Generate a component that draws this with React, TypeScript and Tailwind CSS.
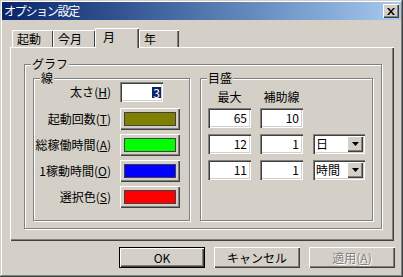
import React from "react";

const raised =
  "shadow-[inset_1px_1px_#ffffff,inset_-1px_-1px_#404040,inset_-2px_-2px_#808080]";
const sunken =
  "shadow-[inset_1px_1px_#808080,inset_2px_2px_#404040,inset_-1px_-1px_#ffffff,inset_-2px_-2px_#d4d0c8]";
const etched =
  "border border-[#808080] shadow-[inset_1px_1px_#ffffff,1px_1px_#ffffff]";

function Group({
  label,
  className,
  children,
}: {
  label: string;
  className?: string;
  children: React.ReactNode;
}) {
  return (
    <div className={`relative ${etched} ${className ?? ""}`}>
      <span className="absolute left-[6px] top-[-7px] bg-[#d4d0c8] px-[1px] text-[12px] leading-[12px]">
        {label}
      </span>
      {children}
    </div>
  );
}

function Label({ text, k, tail }: { text: string; k: string; tail?: string }) {
  return (
    <span className="w-[77px] text-right text-[12px] leading-[14px] whitespace-nowrap">
      {text}(<u>{k}</u>){tail}
    </span>
  );
}

function ColorButton({ color }: { color: string }) {
  return (
    <div className={`w-[60px] h-[22px] ${raised} flex items-center justify-center`}>
      <div className={`w-[52px] h-[14px] border border-[#404040] ${color}`} />
    </div>
  );
}

function NumBox({ v }: { v: string }) {
  return (
    <div
      className={`w-[43px] h-[20px] bg-white ${sunken} flex items-center justify-end pr-[4px] text-[12px] leading-[14px]`}
    >
      {v}
    </div>
  );
}

function Combo({ v }: { v: string }) {
  return (
    <div className={`w-[52px] h-[20px] bg-white ${sunken} flex items-center pl-[3px] pr-[2px]`}>
      <span className="flex-1 text-[12px] leading-[14px]">{v}</span>
      <div className={`w-[16px] h-[16px] bg-[#d4d0c8] ${raised} flex items-center justify-center`}>
        <svg width="7" height="4" viewBox="0 0 7 4">
          <path d="M0 0h7L3.5 4z" fill="#000" />
        </svg>
      </div>
    </div>
  );
}

function DlgButton({
  children,
  def,
  disabled,
}: {
  children: React.ReactNode;
  def?: boolean;
  disabled?: boolean;
}) {
  return (
    <div
      className={`w-[86px] h-[21px] flex items-center justify-center text-[12px] leading-[14px] ${
        def ? "border border-black" : ""
      } ${raised} ${
        disabled ? "text-[#808080] [text-shadow:1px_1px_0_#ffffff]" : "text-black"
      }`}
    >
      {children}
    </div>
  );
}

export default function App() {
  return (
    <div
      className="w-[403px] h-[277px] bg-[#d4d0c8] p-[2px] flex flex-col text-black shadow-[inset_-1px_-1px_#404040,inset_1px_1px_#d4d0c8,inset_-2px_-2px_#808080,inset_2px_2px_#ffffff]"
      style={{ fontFamily: '"Noto Sans CJK JP", "Liberation Sans", sans-serif' }}
    >
      {/* title bar */}
      <div className="h-[18px] bg-linear-to-r from-[#0a246a] to-[#a6caf0] flex items-center pl-[2px] pr-[2px]">
        <span className="flex-1 text-white text-[12px] leading-[14px] tracking-[-1.3px]">
          オプション設定
        </span>
        <div className={`w-[16px] h-[14px] bg-[#d4d0c8] ${raised} flex items-center justify-center`}>
          <svg width="8" height="7" viewBox="0 0 8 7">
            <path d="M0 0h2l2 2.5L6 0h2L5 3.5 8 7H6L4 4.5 2 7H0l3-3.5z" fill="#000" />
          </svg>
        </div>
      </div>

      {/* body */}
      <div className="flex flex-col pl-[8px] pr-[7px] pt-[8px]">
        {/* tabs */}
        <div className="h-[19px] flex items-end pl-[2px]">
          <div className="w-[41px] h-[17px] shadow-[inset_1px_1px_#ffffff,inset_-1px_0_#404040] flex items-center pl-[5px] text-[12px] leading-[14px]">
            起動
          </div>
          <div className="w-[42px] h-[17px] shadow-[inset_1px_1px_#ffffff,inset_-1px_0_#404040] flex items-center pl-[5px] text-[12px] leading-[14px]">
            今月
          </div>
          <div className="relative z-10 w-[44px] h-[20px] mb-[-1px] bg-[#d4d0c8] shadow-[inset_1px_1px_#ffffff,inset_-1px_0_#404040,inset_-2px_0_#808080] flex items-start pt-[2px] pl-[8px] text-[12px] leading-[14px]">
            月
          </div>
          <div className="w-[40px] h-[17px] shadow-[inset_1px_1px_#ffffff,inset_-1px_0_#404040,inset_-2px_0_#808080] flex items-center pl-[5px] text-[12px] leading-[14px]">
            年
          </div>
        </div>

        {/* panel */}
        <div className="h-[194px] shadow-[inset_1px_1px_#ffffff,inset_-1px_-1px_#404040,inset_-2px_-2px_#808080] pl-[14px] pr-[12px] pt-[17px] pb-[12px] flex">
          <Group label="グラフ" className="flex-1 flex gap-[10px] pl-[8px] pr-[8px] pt-[13px] pb-[7px]">
            {/* 線 */}
            <Group label="線" className="w-[157px] flex flex-col pt-[3px]">
              <div className="flex items-center h-[20px]">
                <Label text="太さ" k="H" />
                <div
                  className={`ml-[9px] w-[43px] h-[20px] bg-white ${sunken} flex items-center justify-end pr-[2px]`}
                >
                  <span className="bg-[#0a246a] text-white text-[12px] leading-[11px] px-[1px]">3</span>
                </div>
              </div>
              <div className="flex flex-col gap-[4px] mt-[6px]">
                <div className="flex items-center h-[22px]">
                  <Label text="起動回数" k="T" />
                  <div className="ml-[9px]">
                    <ColorButton color="bg-[#808000]" />
                  </div>
                </div>
                <div className="flex items-center h-[22px]">
                  <Label text="総稼働時間" k="A" />
                  <div className="ml-[9px]">
                    <ColorButton color="bg-[#00ff00]" />
                  </div>
                </div>
                <div className="flex items-center h-[22px]">
                  <Label text="1稼動時間" k="O" />
                  <div className="ml-[9px]">
                    <ColorButton color="bg-[#0000ff]" />
                  </div>
                </div>
                <div className="flex items-center h-[22px]">
                  <Label text="選択色" k="S" />
                  <div className="ml-[9px]">
                    <ColorButton color="bg-[#ff0000]" />
                  </div>
                </div>
              </div>
            </Group>

            {/* 目盛 */}
            <Group label="目盛" className="flex-1 flex flex-col pl-[7px] pt-[10px]">
              <div className="flex h-[16px] items-center gap-[9px] text-[12px] leading-[14px]">
                <span className="w-[43px] text-center">最大</span>
                <span className="w-[43px] text-center">補助線</span>
              </div>
              <div className="flex flex-col gap-[6px] mt-[3px]">
                <div className="flex gap-[9px]">
                  <NumBox v="65" />
                  <NumBox v="10" />
                </div>
                <div className="flex gap-[9px]">
                  <NumBox v="12" />
                  <NumBox v="1" />
                  <div className="ml-[1px]">
                    <Combo v="日" />
                  </div>
                </div>
                <div className="flex gap-[9px]">
                  <NumBox v="11" />
                  <NumBox v="1" />
                  <div className="ml-[1px]">
                    <Combo v="時間" />
                  </div>
                </div>
              </div>
            </Group>
          </Group>
        </div>
      </div>

      {/* buttons */}
      <div className="flex justify-end gap-[9px] pr-[6px] mt-[6px]">
        <DlgButton def>OK</DlgButton>
        <DlgButton>キャンセル</DlgButton>
        <DlgButton disabled>
          適用(<u>A</u>)
        </DlgButton>
      </div>
    </div>
  );
}
